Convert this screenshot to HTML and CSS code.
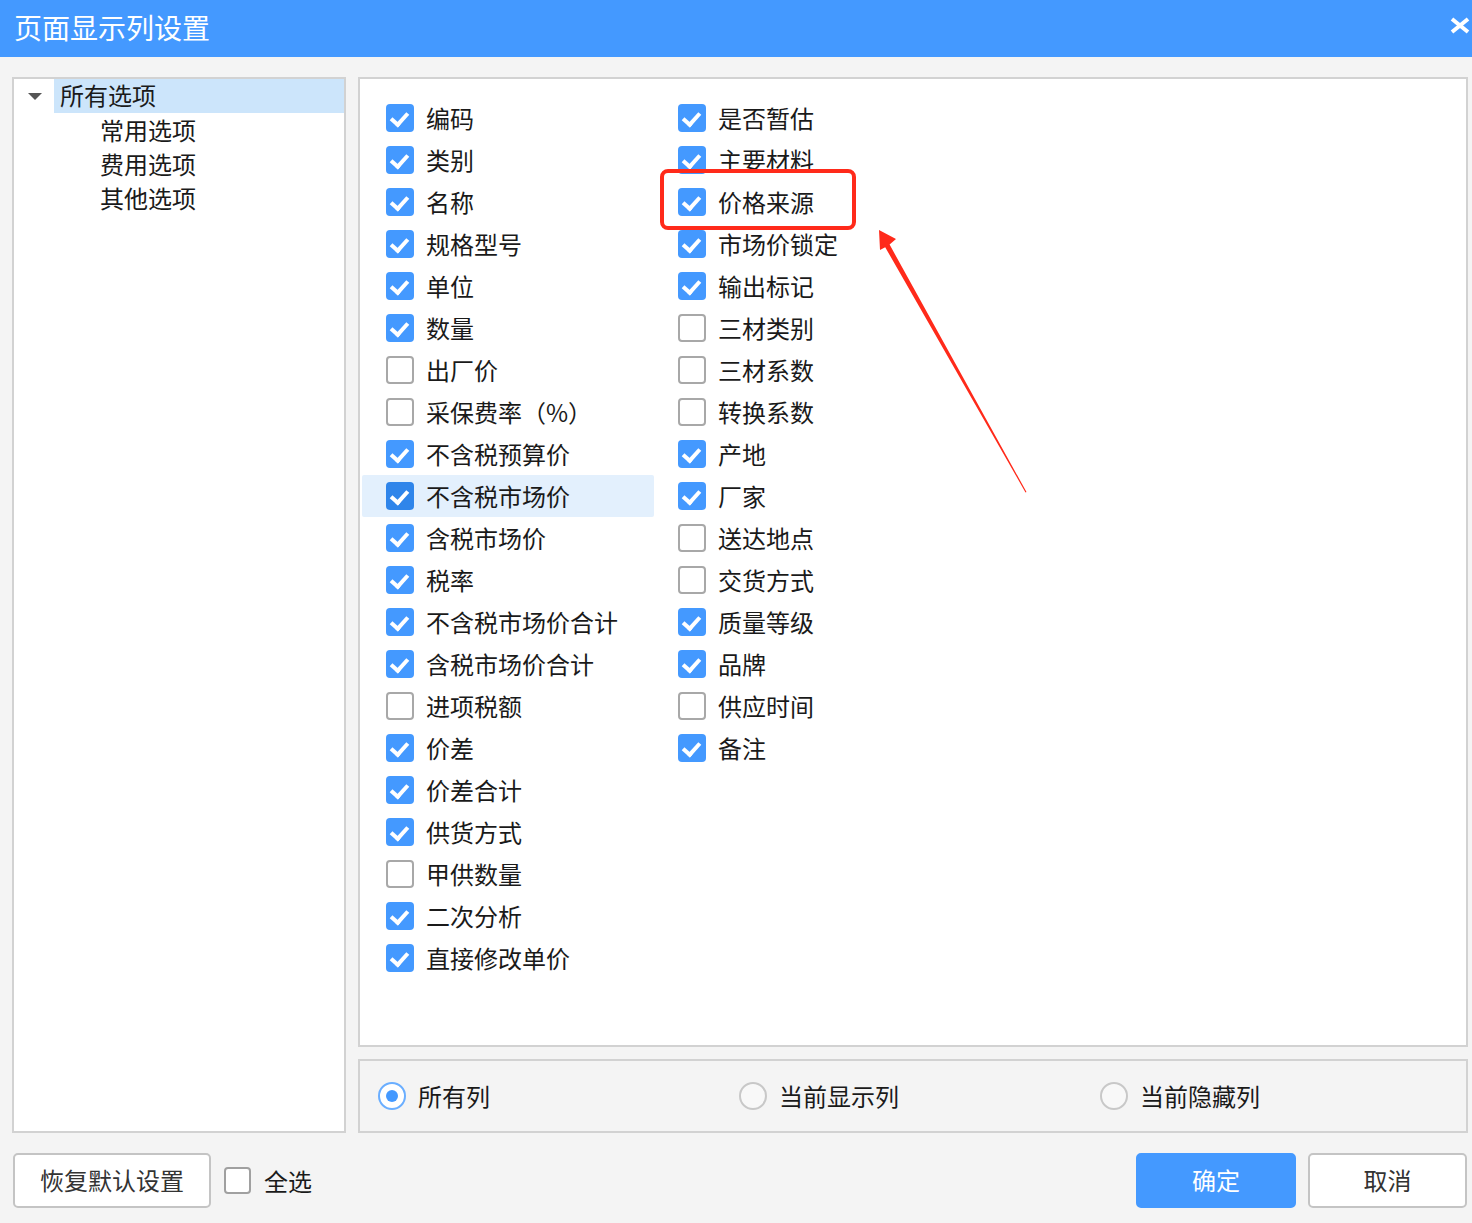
FILE: index.html
```html
<!DOCTYPE html>
<html lang="zh-CN">
<head>
<meta charset="utf-8">
<title>页面显示列设置</title>
<link rel="stylesheet" href="styles.css">
</head>
<body>
<div class="dialog">
  <header class="titlebar">
    <span class="title">页面显示列设置</span>
    <svg class="close" width="20" height="17" viewBox="0 0 20 17"><path d="M2 2 L18 15 M18 2 L2 15" stroke="#fff" stroke-width="4" fill="none"/></svg>
  </header>

  <main class="content">
    <section class="tree panel">
      <div class="tree-row root"><span class="caret"></span><span class="tree-label sel">所有选项</span></div>
      <div class="tree-row child">常用选项</div>
      <div class="tree-row child">费用选项</div>
      <div class="tree-row child">其他选项</div>
    </section>

    <section class="list panel">
      <div class="col">
        <label class="row"><span class="cb on"></span>编码</label>
        <label class="row"><span class="cb on"></span>类别</label>
        <label class="row"><span class="cb on"></span>名称</label>
        <label class="row"><span class="cb on"></span>规格型号</label>
        <label class="row"><span class="cb on"></span>单位</label>
        <label class="row"><span class="cb on"></span>数量</label>
        <label class="row"><span class="cb"></span>出厂价</label>
        <label class="row"><span class="cb"></span>采保费率（%）</label>
        <label class="row"><span class="cb on"></span>不含税预算价</label>
        <label class="row hover"><span class="cb on dark"></span>不含税市场价</label>
        <label class="row"><span class="cb on"></span>含税市场价</label>
        <label class="row"><span class="cb on"></span>税率</label>
        <label class="row"><span class="cb on"></span>不含税市场价合计</label>
        <label class="row"><span class="cb on"></span>含税市场价合计</label>
        <label class="row"><span class="cb"></span>进项税额</label>
        <label class="row"><span class="cb on"></span>价差</label>
        <label class="row"><span class="cb on"></span>价差合计</label>
        <label class="row"><span class="cb on"></span>供货方式</label>
        <label class="row"><span class="cb"></span>甲供数量</label>
        <label class="row"><span class="cb on"></span>二次分析</label>
        <label class="row"><span class="cb on"></span>直接修改单价</label>
      </div>
      <div class="col">
        <label class="row"><span class="cb on"></span>是否暂估</label>
        <label class="row"><span class="cb on"></span>主要材料</label>
        <label class="row"><span class="cb on"></span>价格来源</label>
        <label class="row"><span class="cb on"></span>市场价锁定</label>
        <label class="row"><span class="cb on"></span>输出标记</label>
        <label class="row"><span class="cb"></span>三材类别</label>
        <label class="row"><span class="cb"></span>三材系数</label>
        <label class="row"><span class="cb"></span>转换系数</label>
        <label class="row"><span class="cb on"></span>产地</label>
        <label class="row"><span class="cb on"></span>厂家</label>
        <label class="row"><span class="cb"></span>送达地点</label>
        <label class="row"><span class="cb"></span>交货方式</label>
        <label class="row"><span class="cb on"></span>质量等级</label>
        <label class="row"><span class="cb on"></span>品牌</label>
        <label class="row"><span class="cb"></span>供应时间</label>
        <label class="row"><span class="cb on"></span>备注</label>
      </div>
    </section>

    <section class="radios panel">
      <label class="radio-item"><span class="radio on"></span>所有列</label>
      <label class="radio-item"><span class="radio"></span>当前显示列</label>
      <label class="radio-item"><span class="radio"></span>当前隐藏列</label>
    </section>
  </main>

  <footer class="footer">
    <div class="footer-left">
      <button class="btn">恢复默认设置</button>
      <label class="selectall"><span class="cb"></span>全选</label>
    </div>
    <div class="footer-right">
      <button class="btn primary">确定</button>
      <button class="btn cancel">取消</button>
    </div>
  </footer>

  <svg class="annot" width="1472" height="1223" viewBox="0 0 1472 1223">
    <rect x="662" y="171" width="192" height="57" rx="6" ry="6" fill="none" stroke="#ff2a1a" stroke-width="4"/>
    <polygon points="879,230 896,239 889.6,244.6 1026.5,492 1025.5,492.4 885.2,247.2 880,250" fill="#ff2a1a"/>
  </svg>
</div>
</body>
</html>
```

FILE: styles.css
```css
* {
  box-sizing: border-box;
}

html, body {
  margin: 0;
  padding: 0;
}

body {
  width: 1472px;
  height: 1223px;
  background: #f4f4f4;
  font-family: "Noto Sans CJK SC", "Noto Sans", "Liberation Sans", sans-serif;
  color: #1a1a1a;
  overflow: hidden;
}

.dialog {
  position: relative;
  width: 1472px;
  height: 1223px;
}

.titlebar {
  height: 57px;
  background: #4499ff;
  display: flex;
  align-items: center;
  justify-content: space-between;
  padding: 0 2px 0 14px;
}

.title {
  color: #fff;
  font-size: 28px;
  line-height: 57px;
  margin-top: -2px;
}

.close {
  display: block;
  margin-top: -6px;
}

.content {
  display: grid;
  grid-template-columns: 334px 1110px;
  grid-template-rows: 970px 74px;
  column-gap: 12px;
  row-gap: 12px;
  padding: 20px 0 0 12px;
}

.panel {
  border: 2px solid #d2d2d2;
}

.tree {
  grid-row: 1 / 3;
  background: #fff;
}

.tree-row {
  height: 34px;
  display: flex;
  align-items: center;
  font-size: 24px;
  line-height: 32px;
}

.caret {
  width: 40px;
  height: 34px;
  display: flex;
  align-items: center;
  padding-left: 14px;
}

.caret::before {
  content: "";
  display: block;
  border-left: 7px solid transparent;
  border-right: 7px solid transparent;
  border-top: 7px solid #555;
}

.tree-label.sel {
  flex: 1;
  height: 34px;
  background: #cce5fb;
  padding-left: 6px;
}

.tree-row.child {
  padding-left: 86px;
}

.list {
  background: #fff;
  display: flex;
  padding: 18px 0 0 2px;
}

.col {
  width: 292px;
  display: flex;
  flex-direction: column;
}

.row {
  height: 42px;
  display: flex;
  align-items: center;
  gap: 12px;
  padding-left: 24px;
  font-size: 24px;
  line-height: 40px;
  white-space: nowrap;
}

.row.hover {
  background: #e3f0fd;
  border-radius: 2px;
}

.cb {
  width: 28px;
  height: 28px;
  flex: none;
  border: 2px solid #a8a8a8;
  border-radius: 4px;
  background: #fff;
  position: relative;
  margin-bottom: 1px;
}

.cb.on {
  border: none;
  background: #4499ff;
}

.cb.on.dark {
  background: #2f85ea;
}

.cb.on::after {
  content: "";
  position: absolute;
  left: 8px;
  top: 5px;
  width: 7px;
  height: 13px;
  border-right: 4px solid #fff;
  border-bottom: 4px solid #fff;
  transform: rotate(42deg);
  transform-origin: center;
}

.radios {
  background: #f4f4f4;
  display: grid;
  grid-template-columns: repeat(3, 361px);
  align-items: center;
  padding-left: 18px;
}

.radio-item {
  display: flex;
  align-items: center;
  gap: 12px;
  font-size: 24px;
  line-height: 32px;
}

.radio {
  width: 28px;
  height: 28px;
  border: 2px solid #c8c8c8;
  border-radius: 50%;
  background: #f8f8f8;
  display: flex;
  align-items: center;
  justify-content: center;
  margin-bottom: 1px;
}

.radio.on {
  border-color: #6aaeff;
  background: #fff;
}

.radio.on::after {
  content: "";
  width: 12px;
  height: 12px;
  border-radius: 50%;
  background: #4499ff;
}

.footer {
  display: flex;
  justify-content: space-between;
  align-items: center;
  padding: 0 5px 0 13px;
  margin-top: 20px;
}

.footer-left,
.footer-right {
  display: flex;
  align-items: center;
}

.footer-right {
  gap: 12px;
}

.btn {
  height: 55px;
  font-family: inherit;
  font-size: 24px;
  line-height: 32px;
  color: #333;
  background: #fff;
  border: 2px solid #c4c4c4;
  border-radius: 5px;
  padding: 0 0 2px 0;
}

.footer-left .btn {
  width: 198px;
}

.btn.primary {
  width: 160px;
  background: #4499ff;
  border-color: #4499ff;
  color: #fff;
}

.btn.cancel {
  width: 159px;
}

.selectall {
  display: flex;
  align-items: center;
  gap: 13px;
  margin-left: 13px;
  font-size: 24px;
  line-height: 32px;
}

.selectall .cb {
  width: 27px;
  height: 27px;
  border-color: #a0a0a0;
}

.annot {
  position: absolute;
  left: 0;
  top: 0;
  pointer-events: none;
}
```
